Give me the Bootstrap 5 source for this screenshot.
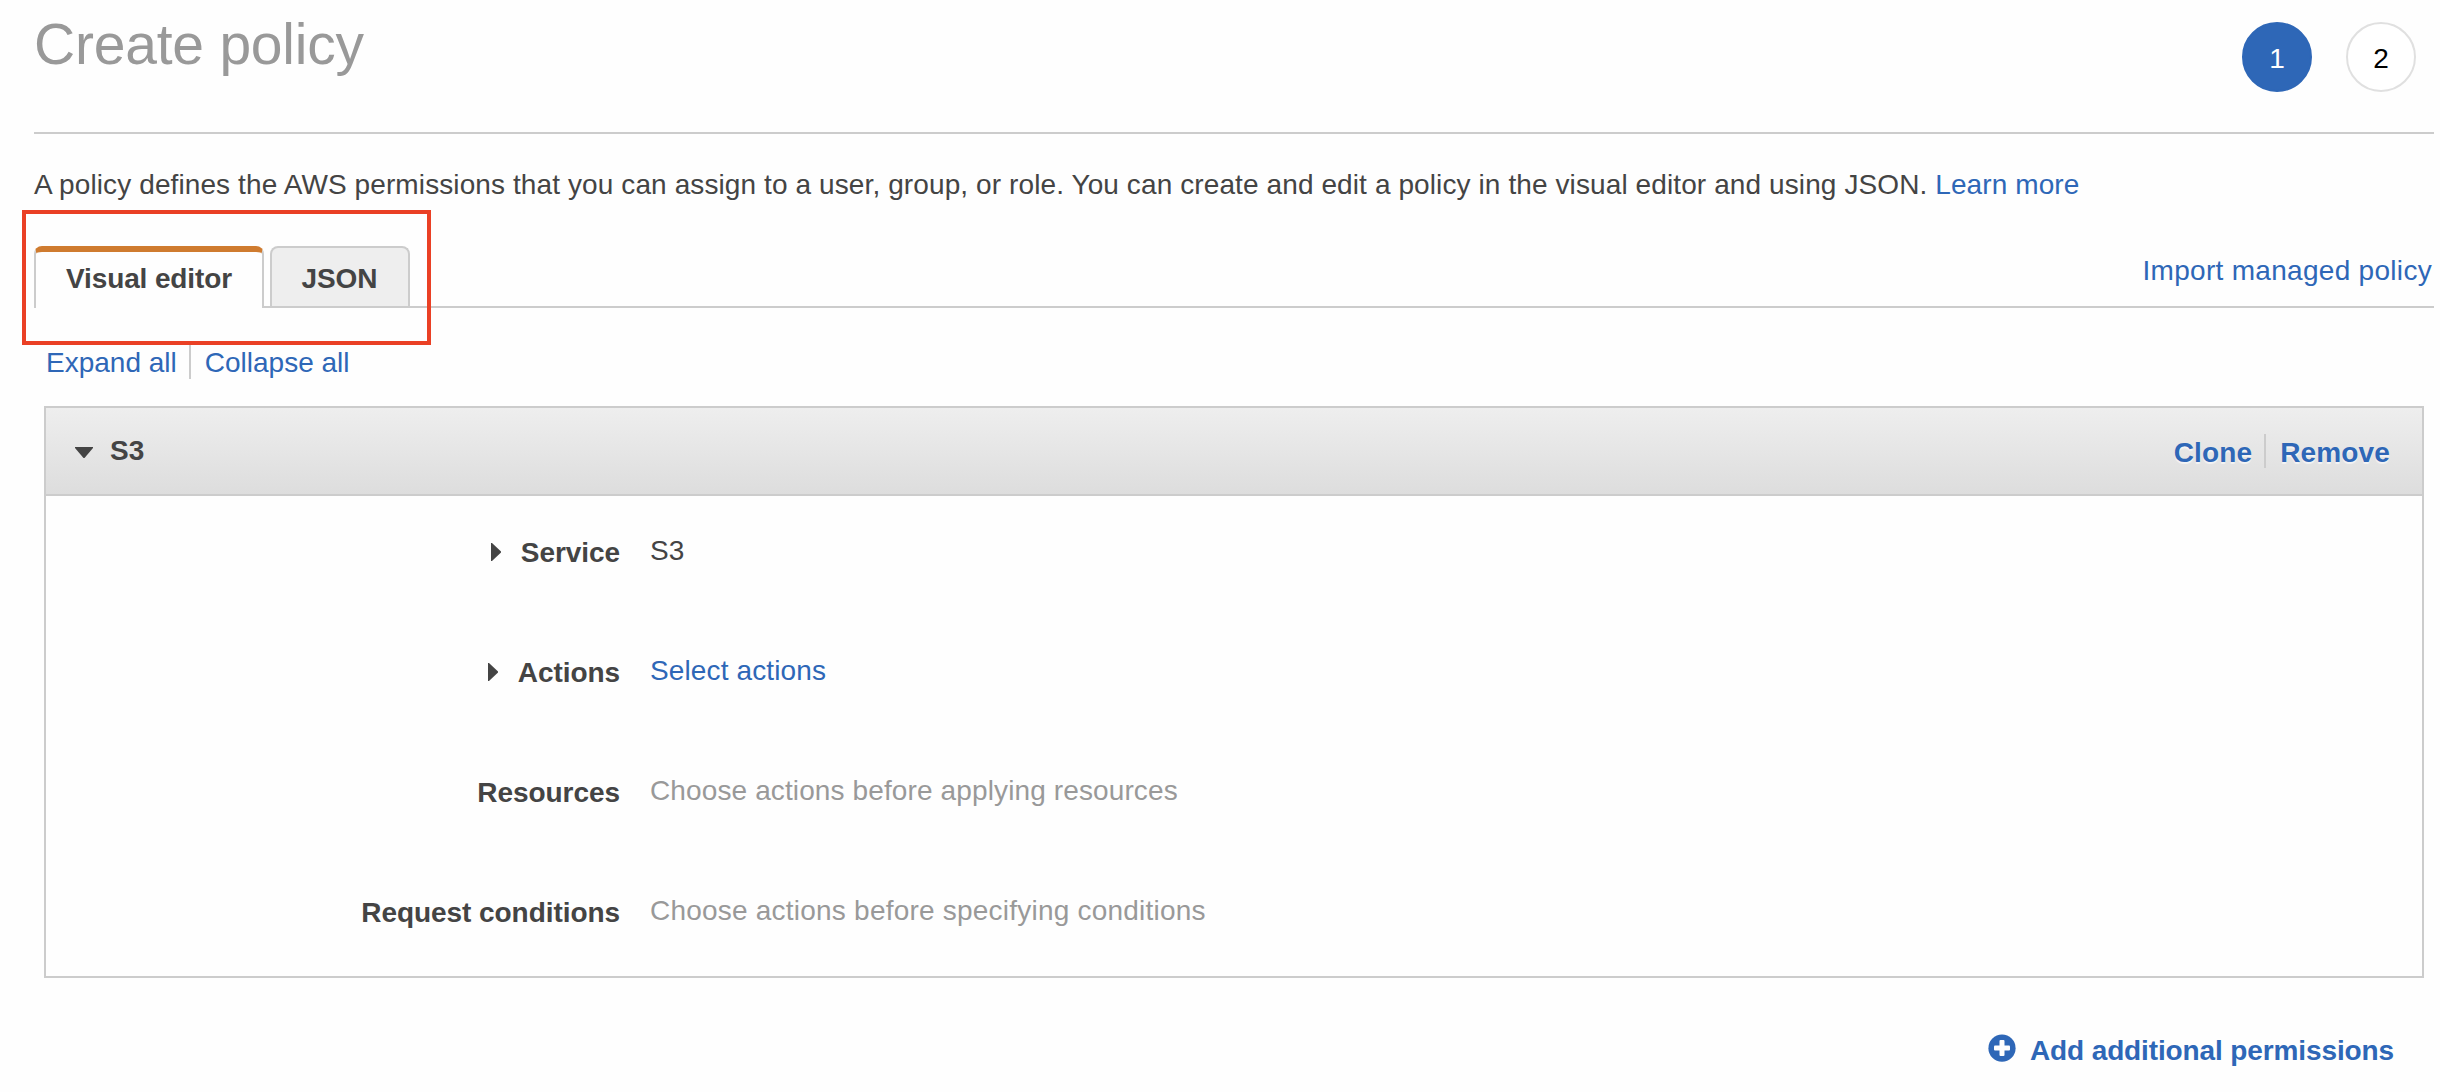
<!DOCTYPE html>
<html lang="en">
<head>
<meta charset="utf-8">
<title>Create policy</title>
<link rel="stylesheet" href="https://cdn.jsdelivr.net/npm/bootstrap@5.3.0/dist/css/bootstrap.min.css">
<style>
body{font-family:"Liberation Sans",Arial,sans-serif;font-size:28px;line-height:40px;color:#444;background:#fefefe;overflow:hidden}
a{color:#2e67b7;text-decoration:none}
svg{flex:none;display:block}
.page{padding:0 6px 0 34px}
.page-head{height:134px;border-bottom:2px solid #ccc;padding:12px 18px 0 0}
.page-head h1{font-size:57px;line-height:64px;color:#999;font-weight:400;letter-spacing:-.22px}
.step{width:70px;height:70px;border:2px solid #e0e0e0;color:#000;background:#fff;margin-top:10px;padding-top:3px}
.step.current{background:#2e67b7;border-color:#2e67b7;color:#fff}
.steps{gap:34px}
.intro{margin:31px 0 41px;height:40px;white-space:nowrap;letter-spacing:.103px}
.tabs{height:62px;border-bottom:2px solid #ccc;position:relative}
.tab{font-weight:700;color:#444;border:2px solid #ccc;border-bottom:0;border-radius:8px 8px 0 0;height:60px;padding-top:11px;background:#eee;text-align:center;letter-spacing:-.12px}
.tab.current{width:230px;height:62px;margin-right:6px;background:#fefefe;border-top:6px solid #cf7b2f;padding-top:7px}
.tab.json{width:140px;padding-right:1px}
.import{padding:5px 2px 0 0;letter-spacing:.3px}
.highlight{position:absolute;left:-12px;top:-36px;width:409px;height:135px;border:4px solid #ea4025;pointer-events:none}
.toggles{height:34px;margin:37px 0 27px 12px;line-height:36px}
.vbar{width:2px;height:34px;background:#ccc;margin:0 14px 0 12px}
.panel{margin:0 10px;height:572px;border:2px solid #ccc}
.panel-top{height:88px;border-bottom:2px solid #ccc;background:linear-gradient(#eee,#ddd);font-weight:700;padding:0 32px 0 29px}
.panel-top a{text-shadow:0 2px 1px rgba(255,255,255,.6);padding-top:4px;letter-spacing:.15px}
.caret-down{margin:3px 17px 0 0}
.fields{padding-top:35px}
.field{height:120px;white-space:nowrap}
.field-name{width:574px;font-weight:700;padding-top:2px;gap:20px;letter-spacing:-.06px}
.field-name svg{margin-top:10px}
.field-value{margin-left:30px;letter-spacing:.12px}
.conditions{letter-spacing:.22px}
.dim{color:#999}
.add{margin:53px 40px 0 0;font-weight:700;letter-spacing:-.12px}
.add svg{margin:3px 14px 0 0}
</style>
<script src="https://cdn.jsdelivr.net/npm/bootstrap@5.3.0/dist/js/bootstrap.bundle.min.js"></script>
</head>
<body>
<main class="page">
<header class="page-head d-flex justify-content-between align-items-start">
<h1 class="m-0">Create policy</h1>
<div class="steps d-flex"><span class="step current rounded-circle d-flex align-items-center justify-content-center">1</span><span class="step rounded-circle d-flex align-items-center justify-content-center">2</span></div>
</header>
<p class="intro">A policy defines the AWS permissions that you can assign to a user, group, or role. You can create and edit a policy in the visual editor and using JSON. <a href="#">Learn more</a></p>
<nav class="tabs d-flex">
<a href="#" class="tab current">Visual editor</a>
<a href="#" class="tab json">JSON</a>
<a href="#" class="import ms-auto">Import managed policy</a>
<div class="highlight"></div>
</nav>
<div class="toggles d-flex"><a href="#">Expand all</a><span class="vbar"></span><a href="#">Collapse all</a></div>
<section class="panel">
<div class="panel-top d-flex align-items-center">
<svg class="caret-down" width="18" height="11" viewBox="0 0 18 11"><path d="M0 0H18V1L9.5 11H8.5L0 1Z" fill="#444"/></svg>
<span>S3</span>
<a href="#" class="ms-auto">Clone</a><span class="vbar"></span><a href="#">Remove</a>
</div>
<div class="fields">
<div class="field d-flex"><div class="field-name d-flex justify-content-end"><svg width="10" height="18" viewBox="0 0 10 18"><path d="M0 0H1L10 8.5V9.5L1 18H0Z" fill="#444"/></svg><span>Service</span></div><div class="field-value">S3</div></div>
<div class="field d-flex"><div class="field-name d-flex justify-content-end"><svg width="10" height="18" viewBox="0 0 10 18"><path d="M0 0H1L10 8.5V9.5L1 18H0Z" fill="#444"/></svg><span>Actions</span></div><a href="#" class="field-value">Select actions</a></div>
<div class="field d-flex"><div class="field-name d-flex justify-content-end"><span>Resources</span></div><div class="field-value dim">Choose actions before applying resources</div></div>
<div class="field d-flex"><div class="field-name d-flex justify-content-end"><span>Request conditions</span></div><div class="field-value conditions dim">Choose actions before specifying conditions</div></div>
</div>
</section>
<div class="add d-flex justify-content-end"><a href="#" class="d-flex"><svg width="28" height="28" viewBox="0 0 28 28"><circle cx="14" cy="14.2" r="13.6" fill="#2e67b7"/><g fill="#fefefe"><rect x="11.5" y="6" width="5" height="16" rx="1"/><rect x="6" y="11.5" width="16" height="5" rx="1"/></g></svg>Add additional permissions</a></div>
</main>
</body>
</html>
